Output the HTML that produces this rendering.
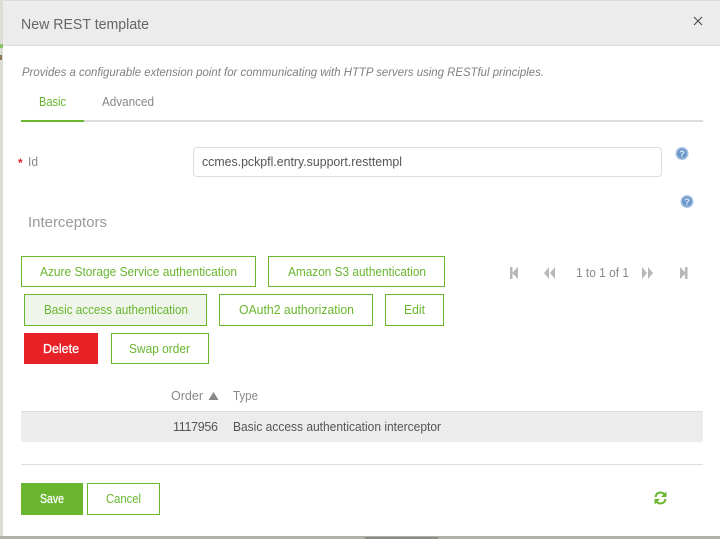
<!DOCTYPE html>
<html><head><meta charset="utf-8"><title>New REST template</title>
<style>
html,body{margin:0;padding:0;width:720px;height:539px;overflow:hidden;background:#fff}
svg{display:block}
text{font-family:"Liberation Sans",sans-serif;font-size:12px;white-space:pre}
.g{fill:#69b62e}
.b{fill:#fff;stroke:#69b62e;stroke-width:1}
.w{fill:#fff;stroke:#fff;stroke-width:.3}
</style></head><body>
<svg width="720" height="539" viewBox="0 0 720 539" xmlns="http://www.w3.org/2000/svg">
<rect width="720" height="539" fill="#dedcd7"/>
<rect x="0" y="44" width="3" height="4" fill="#8fc06a"/>
<rect x="0" y="55" width="2" height="5" fill="#8a7a50"/>
<rect x="0" y="536" width="720" height="3" fill="#b0b0aa"/>
<rect x="365" y="537" width="73" height="2" fill="#8a8a86"/>
<rect x="3" y="1" width="717" height="535" fill="#fff"/>
<rect x="3" y="1" width="717" height="44" fill="#ececec"/>
<rect x="3" y="45" width="717" height="1" fill="#ddd"/>
<text x="21" y="29" style="font-size:14.500px" fill="#666" textLength="128" lengthAdjust="spacingAndGlyphs">New REST template</text>
<path d="M694 17L702 25M702 17L694 25" stroke="#444" stroke-width="1" fill="none"/>
<text x="22" y="76" style="font-style:italic;font-size:12px" fill="#808080" textLength="522" lengthAdjust="spacingAndGlyphs">Provides a configurable extension point for communicating with HTTP servers using RESTful principles.</text>
<text x="39" y="106" class="g" style="font-size:12.500px" textLength="27" lengthAdjust="spacingAndGlyphs">Basic</text>
<text x="102" y="106" fill="#888" style="font-size:12.500px" textLength="52" lengthAdjust="spacingAndGlyphs">Advanced</text>
<rect x="21" y="120" width="682" height="2" fill="#ddd"/>
<rect x="21" y="120" width="63" height="2" fill="#69b62e"/>
<text x="18" y="167" style="font-size:12px;font-weight:bold" fill="#e0222a">*</text>
<text x="28" y="166" fill="#888" style="font-size:12.500px" textLength="10" lengthAdjust="spacingAndGlyphs">Id</text>
<rect x="193.500" y="147.500" width="468" height="29" rx="3.500" fill="#fff" stroke="#ddd"/>
<text x="202" y="166" fill="#555" style="font-size:12.500px" textLength="200" lengthAdjust="spacingAndGlyphs">ccmes.pckpfl.entry.support.resttempl</text>
<g>
<circle cx="682" cy="153.500" r="6.500" fill="#a9c4e4"/><circle cx="682" cy="153.500" r="5" fill="#6a96ca"/>
<text x="682" y="157" text-anchor="middle" style="font-size:9.500px;font-weight:bold" fill="#e6eef8">?</text>
<circle cx="687" cy="201.500" r="6.500" fill="#a9c4e4"/><circle cx="687" cy="201.500" r="5" fill="#6a96ca"/>
<text x="687" y="205" text-anchor="middle" style="font-size:9.500px;font-weight:bold" fill="#e6eef8">?</text>
</g>
<text x="28" y="227" style="font-size:14.500px" fill="#999" textLength="79" lengthAdjust="spacingAndGlyphs">Interceptors</text>

<rect class="b" x="21.500" y="256.500" width="234" height="30"/>
<text x="40" y="276" class="g" style="font-size:12.500px" textLength="197" lengthAdjust="spacingAndGlyphs">Azure Storage Service authentication</text>
<rect class="b" x="268.500" y="256.500" width="176" height="30"/>
<text x="288" y="276" class="g" style="font-size:12.500px" textLength="138" lengthAdjust="spacingAndGlyphs">Amazon S3 authentication</text>
<rect class="b" x="24.500" y="294.500" width="182" height="31" style="fill:#eff5ea"/>
<text x="44" y="314" class="g" style="font-size:12.500px" textLength="144" lengthAdjust="spacingAndGlyphs">Basic access authentication</text>
<rect class="b" x="219.500" y="294.500" width="153" height="31"/>
<text x="239" y="314" class="g" style="font-size:12.500px" textLength="115" lengthAdjust="spacingAndGlyphs">OAuth2 authorization</text>
<rect class="b" x="385.500" y="294.500" width="58" height="31"/>
<text x="404" y="314" class="g" style="font-size:12.500px" textLength="21" lengthAdjust="spacingAndGlyphs">Edit</text>
<rect x="24" y="333" width="74" height="31" fill="#e82127"/>
<text x="43" y="353" class="w" style="font-size:12.500px" textLength="36" lengthAdjust="spacingAndGlyphs">Delete</text>
<rect class="b" x="111.500" y="333.500" width="97" height="30"/>
<text x="129" y="353" class="g" style="font-size:12.500px" textLength="61" lengthAdjust="spacingAndGlyphs">Swap order</text>

<g fill="#b8b8b8">
<rect x="510" y="267" width="2.500" height="12"/><path d="M518 267V279L512 273Z"/>
<path d="M549 267V279L544 273ZM555 267V279L550 273Z"/>
<path d="M642 267V279L647 273ZM648 267V279L653 273Z"/>
<path d="M680 267V279L686 273Z"/><rect x="685" y="267" width="2.500" height="12"/>
</g>
<text x="576" y="277" fill="#888" style="font-size:12.500px" textLength="53" lengthAdjust="spacingAndGlyphs">1 to 1 of 1</text>

<text x="171" y="400" fill="#888" style="font-size:12.500px" textLength="32" lengthAdjust="spacingAndGlyphs">Order</text>
<path d="M208.500 400L213.500 392L218.500 400Z" fill="#888"/>
<text x="233" y="400" fill="#888" style="font-size:12.500px" textLength="25" lengthAdjust="spacingAndGlyphs">Type</text>
<rect x="21" y="411" width="682" height="31" rx="2" fill="#ececec"/>
<rect x="21" y="411" width="682" height="1" fill="#ddd"/>
<text x="173" y="431" fill="#555" style="font-size:12.500px" textLength="45" lengthAdjust="spacing">1117956</text>
<text x="233" y="431" fill="#555" style="font-size:12.500px" textLength="208" lengthAdjust="spacingAndGlyphs">Basic access authentication interceptor</text>
<rect x="21" y="464" width="682" height="1" fill="#ddd"/>
<rect x="21" y="483" width="62" height="32" fill="#69b62e"/>
<text x="40" y="503" class="w" style="font-size:12.500px" textLength="24" lengthAdjust="spacingAndGlyphs">Save</text>
<rect class="b" x="87.500" y="483.500" width="72" height="31"/>
<text x="106" y="503" class="g" style="font-size:12.500px" textLength="35" lengthAdjust="spacingAndGlyphs">Cancel</text>
<g fill="none" stroke="#69b62e" stroke-width="2">
<path d="M655.500 497C656 494 658 492.500 660.500 492.500C662.500 492.500 664 493.500 665 495"/>
<path d="M665.500 499C665 502 663 503.500 660.500 503.500C658.500 503.500 657 502.500 656 501"/>
</g>
<path d="M666.500 491.500V497H661ZM654.500 504.500V499H660Z" fill="#69b62e"/>
</svg>
</body></html>
